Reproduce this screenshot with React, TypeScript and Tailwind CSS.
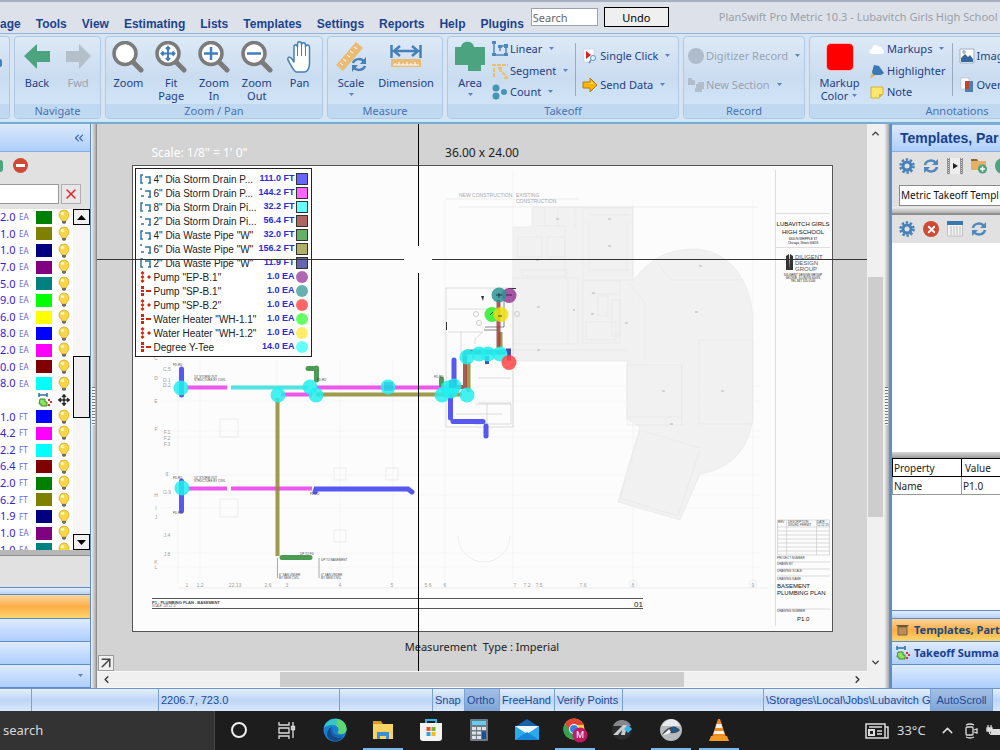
import React from 'react';
import { ChevronDown, ChevronLeft, ChevronRight, ChevronUp, ChevronsLeft, ArrowUpRight, Move, X } from 'lucide-react';

interface TakeoffRow {
    value: string;
    unit: string;
    color: string;
}

interface LegendItem {
    name: string;
    value: string;
    color: string;
    kind: 'line' | 'count';
}

const menuItems = ['age', 'Tools', 'View', 'Estimating', 'Lists', 'Templates', 'Settings', 'Reports', 'Help', 'Plugins'];

const countRows: TakeoffRow[] = [
    { value: '2.0', unit: 'EA', color: 'bg-[#008000]' },
    { value: '1.0', unit: 'EA', color: 'bg-[#808000]' },
    { value: '1.0', unit: 'EA', color: 'bg-[#000080]' },
    { value: '7.0', unit: 'EA', color: 'bg-[#800080]' },
    { value: '5.0', unit: 'EA', color: 'bg-[#008080]' },
    { value: '9.0', unit: 'EA', color: 'bg-[#00ff00]' },
    { value: '6.0', unit: 'EA', color: 'bg-[#ffff00]' },
    { value: '8.0', unit: 'EA', color: 'bg-[#0000ff]' },
    { value: '2.0', unit: 'EA', color: 'bg-[#ff00ff]' },
    { value: '0.0', unit: 'EA', color: 'bg-[#800000]' },
    { value: '8.0', unit: 'EA', color: 'bg-[#00ffff]' },
];

const pipeRows: TakeoffRow[] = [
    { value: '1.0', unit: 'FT', color: 'bg-[#0000ff]' },
    { value: '4.2', unit: 'FT', color: 'bg-[#ff00ff]' },
    { value: '2.2', unit: 'FT', color: 'bg-[#00ffff]' },
    { value: '6.4', unit: 'FT', color: 'bg-[#800000]' },
    { value: '2.0', unit: 'FT', color: 'bg-[#008000]' },
    { value: '6.2', unit: 'FT', color: 'bg-[#808000]' },
    { value: '1.9', unit: 'FT', color: 'bg-[#000080]' },
    { value: '1.0', unit: 'EA', color: 'bg-[#800080]' },
    { value: '1.0', unit: 'EA', color: 'bg-[#008080]' },
];

const legendItems: LegendItem[] = [
    { name: '4" Dia Storm Drain P...', value: '111.0 FT', color: 'bg-[#6666ff]', kind: 'line' },
    { name: '6" Dia Storm Drain P...', value: '144.2 FT', color: 'bg-[#ff66ff]', kind: 'line' },
    { name: '8" Dia Storm Drain Pi...', value: '32.2 FT', color: 'bg-[#66ffff]', kind: 'line' },
    { name: '2" Dia Storm Drain Pi...', value: '56.4 FT', color: 'bg-[#b06660]', kind: 'line' },
    { name: '4" Dia Waste Pipe "W"', value: '32.0 FT', color: 'bg-[#66b066]', kind: 'line' },
    { name: '6" Dia Waste Pipe "W"', value: '156.2 FT', color: 'bg-[#b0b066]', kind: 'line' },
    { name: '2" Dia Waste Pipe "W"', value: '11.9 FT', color: 'bg-[#6666b0]', kind: 'line' },
    { name: 'Pump "EP-B.1"', value: '1.0 EA', color: 'bg-[#b066b0]', kind: 'count' },
    { name: 'Pump "SP-B.1"', value: '1.0 EA', color: 'bg-[#66b0b0]', kind: 'count' },
    { name: 'Pump "SP-B.2"', value: '1.0 EA', color: 'bg-[#ff6666]', kind: 'count' },
    { name: 'Water Heater "WH-1.1"', value: '1.0 EA', color: 'bg-[#66ff66]', kind: 'count' },
    { name: 'Water Heater "WH-1.2"', value: '1.0 EA', color: 'bg-[#ffee66]', kind: 'count' },
    { name: 'Degree Y-Tee', value: '14.0 EA', color: 'bg-[#66ffff]', kind: 'count' },
];

/* ---------- icons ---------- */

function Caret({ className = '' }: { className?: string }) {
    return (
        <svg className={className} width="7" height="4" viewBox="0 0 7 4">
            <path d="M1 0h5L3.500 3z" fill="#5b83bd" />
        </svg>
    );
}

function Magnifier({ children }: { children?: React.ReactNode }) {
    return (
        <svg width="32" height="32" viewBox="0 0 32 32">
            <path d="M21 21l8 8" stroke="#7b7b7b" strokeWidth="5" strokeLinecap="round" />
            <circle cx="13" cy="12.500" r="11" fill="#fff" stroke="#7b7b7b" strokeWidth="3.500" />
            {children}
        </svg>
    );
}

function HandIcon() {
    return (
        <svg width="32" height="32" viewBox="0 0 32 32">
            <path
                d="M12 31c-3-2-5-7-8-12-1-3 2-4 4-1l2 3V6c0-3 3-3 3.500 0V3c0-3 4-3 4 0v1c0-3 4-3 4 0v2c0-3 4-2.500 4 .5V22c0 5-2 9-5 9z"
                fill="#fff"
                stroke="#4580b8"
                strokeWidth="1.500"
                strokeLinejoin="round"
            />
            <path d="M13.500 6v9M17.500 4v11M21.500 6v9" stroke="#4580b8" strokeWidth="1" />
        </svg>
    );
}

function BlockArrow({ flip = false, color }: { flip?: boolean; color: string }) {
    return (
        <svg width="32" height="32" viewBox="0 0 32 32">
            <path d={flip ? 'M29 15L17 3v7H4v11h13v7z' : 'M3 15L16 3v7h13v11H16v7z'} fill={color} />
        </svg>
    );
}

function ScaleIcon() {
    return (
        <svg width="32" height="32" viewBox="0 0 32 32">
            <path d="M1 24L21 1l7 6L8 30z" fill="#e9bb74" />
            <path d="M5 22l3 2M8 18l3 2M12 14l3 2M15 10l3 2M19 6l3 2" stroke="#fff" strokeWidth="1" />
            <g fill="none" stroke="#4580b8" strokeWidth="2.500">
                <path d="M18 22c2-5 9-5 11-1M30 25c-2 5-9 5-11 1" />
            </g>
            <path d="M31 16v7h-6zM17 31v-7h6z" fill="#4580b8" />
        </svg>
    );
}

function DimensionIcon() {
    return (
        <svg width="32" height="32" viewBox="0 0 32 32">
            <path d="M1.500 4v13M30.500 4v13M4 10h24M10 5l-6 5 6 5M22 5l6 5-6 5" fill="none" stroke="#4580b8" strokeWidth="2.500" />
            <path d="M1 18h30v8H1z" fill="#e9bb74" />
            <path d="M3 24h26M5 22v2M9 21v3M13 22v2M17 21v3M21 22v2M25 21v3" stroke="#fff" strokeWidth="1" />
        </svg>
    );
}

function AreaIcon() {
    return (
        <svg width="32" height="32" viewBox="0 0 32 32">
            <path d="M1 6h6c1-7 12-7 13 0h11v18h-4v6H14v-6H1z" fill="#4ba37f" />
        </svg>
    );
}

function LinearIcon() {
    return (
        <svg width="16" height="16" viewBox="0 0 16 16">
            <path d="M2 1v13h12V5H8v5" fill="none" stroke="#4d87bb" strokeWidth="1.500" />
            <path d="M0 0h4v3H0zM0 12h4v3H0zM12 12h4v3h-4zM12 3h4v4h-4zM6 4h4v3H6z" fill="#4d87bb" />
        </svg>
    );
}

function SegmentIcon() {
    return (
        <svg width="16" height="16" viewBox="0 0 16 16">
            <path d="M0 2h16M2 5v10M7 6l8 8" stroke="#e8c070" strokeWidth="2" strokeDasharray="4 1" />
            <path d="M6 5h4M12 15h4" stroke="#e8c070" strokeWidth="2" />
        </svg>
    );
}

function CountIcon() {
    return (
        <svg width="16" height="16" viewBox="0 0 16 16" fill="#4795b4">
            <circle cx="4" cy="4" r="3.500" />
            <circle cx="12" cy="8" r="3" />
            <circle cx="4" cy="12" r="3.500" />
        </svg>
    );
}

function SingleClickIcon() {
    return (
        <svg width="16" height="16" viewBox="0 0 16 16">
            <path d="M2 1h10v13H2z" fill="#fff" stroke="#b8c4d4" strokeWidth="0.500" />
            <path d="M4 3v8l5-4z" fill="#d22" />
            <circle cx="11" cy="10" r="2.500" fill="#dff" stroke="#5a90c4" />
            <path d="M9 12l-2 3" stroke="#5a90c4" strokeWidth="1.500" />
        </svg>
    );
}

function SendIcon() {
    return (
        <svg width="16" height="16" viewBox="0 0 16 16">
            <path d="M1 5h7V1l7 7-7 7v-4H1z" fill="#f7b500" stroke="#b87a10" />
            <path d="M2 6h7V4l3 3z" fill="#ffe27a" />
        </svg>
    );
}

function GearIcon() {
    return (
        <svg width="16" height="16" viewBox="0 0 16 16">
            <circle cx="8" cy="8" r="4" fill="none" stroke="#4580b8" strokeWidth="3" />
            <circle cx="8" cy="8" r="6.500" fill="none" stroke="#4580b8" strokeWidth="2.500" strokeDasharray="2.400 1.680" />
        </svg>
    );
}

function RefreshIcon() {
    return (
        <svg width="16" height="16" viewBox="0 0 16 16">
            <path d="M2 7c1-5 8-6 11-2M14 9c-1 5-8 6-11 2" fill="none" stroke="#5088bc" strokeWidth="2.500" />
            <path d="M15 1v6H9zM1 15V9h6z" fill="#5088bc" />
        </svg>
    );
}

function BulbIcon() {
    return (
        <svg width="12" height="16" viewBox="0 0 12 16" className="shrink-0">
            <path d="M6 1a5 5 0 0 0-3 9l1 2h4l1-2a5 5 0 0 0-3-9z" fill="#f8d648" stroke="#d7a82c" strokeWidth="0.800" />
            <circle cx="4.500" cy="4.500" r="1.800" fill="#fff6b8" />
            <path d="M4 12h4v2L6 15 4 14z" fill="#6f6f68" />
        </svg>
    );
}

function TakeoffIcon() {
    return (
        <svg width="14" height="14" viewBox="0 0 14 14" className="shrink-0">
            <path d="M1 2h8M1 0v4M9 0v4" stroke="#2b72a8" strokeWidth="1.500" />
            <path d="M2 6h5v3h2v4H3v-2H1z" fill="#8fe35c" stroke="#3a8a2a" />
            <path d="M10 6h2v2h-2zM12 8h2v2h-2zM10 11h2v2h-2z" fill="#d33" />
        </svg>
    );
}

function LegendGlyph({ kind, round }: { kind: 'line' | 'count'; round: boolean }) {
    if (kind === 'count') {
        return (
            <svg width="12" height="12" viewBox="0 0 12 12" fill="#cc2a10">
                {round ? (
                    <path d="M2.500 0l2 2-2 2-2-2zM2.500 4l2 2-2 2-2-2zM2.500 8l2 2-2 2-2-2zM9 4l2 2-2 2-2-2z" />
                ) : (
                    <path d="M1 1h3v3H1zM1 5h3v2H1zM1 8h3v3H1zM6 5h5v2H6z" />
                )}
            </svg>
        );
    }
    return (
        <svg width="12" height="12" viewBox="0 0 12 12">
            <path d={round ? 'M3 2H1v8h2M5 4h5v6M8 10h3' : 'M1 1v2M1 9h3M5 4h5v6M8 10h3'} fill="none" stroke="#2f74a5" strokeWidth="1.500" />
        </svg>
    );
}

/* ---------- ribbon ---------- */

function RibbonGroup({ title, className, children }: { title: string; className: string; children?: React.ReactNode }) {
    return (
        <section className={`flex shrink-0 flex-col overflow-hidden rounded-sm border border-[#afc9e4] bg-gradient-to-b from-[#dde9f6] via-[#cadcf0] to-[#d5e7f9] ${className}`}>
            <div className="flex flex-1 pt-1">{children}</div>
            <div className="h-[14px] bg-[#c1d8f1] text-center text-[11px] leading-[14px] text-[#4572b2]">{title}</div>
        </section>
    );
}

function BigButton({ icon, label, caret = false, inlineCaret = false, disabled = false, className = '' }: {
    icon: React.ReactNode;
    label: string[];
    caret?: boolean;
    inlineCaret?: boolean;
    disabled?: boolean;
    className?: string;
}) {
    return (
        <button disabled={disabled} className={`flex flex-col items-center text-[11px] leading-[13px] ${disabled ? 'text-[#9aa3b0]' : 'text-[#1d4088]'} ${className}`}>
            <span className="mb-[3px] flex h-8 items-center">{icon}</span>
            {label.map((line, i) => (
                <span key={line} className="flex items-center gap-[3px]">
                    {line}
                    {inlineCaret && i === label.length - 1 && <Caret />}
                </span>
            ))}
            {caret && <Caret className="mt-1" />}
        </button>
    );
}

function SmallButton({ icon, label, caret = false, disabled = false }: {
    icon: React.ReactNode;
    label: string;
    caret?: boolean;
    disabled?: boolean;
}) {
    return (
        <button disabled={disabled} className={`flex items-center gap-[2px] whitespace-nowrap text-[11px] leading-4 ${disabled ? 'text-[#9aa3b0]' : 'text-[#1d4088]'}`}>
            {icon}
            {label}
            {caret && <Caret className="ml-1" />}
        </button>
    );
}

function Ribbon() {
    return (
        <div className="flex h-[87px] shrink-0 gap-1 overflow-hidden bg-[#d6e4f3] pt-[2px] pb-[2px]">
            <section className="flex w-[10px] shrink-0 flex-col justify-between overflow-hidden rounded-r-sm border border-l-0 border-[#afc9e4] bg-gradient-to-b from-[#dde9f6] via-[#cadcf0] to-[#d5e7f9]">
                <span className="mt-[22px] h-2 w-[2px] rounded-r-full bg-[#4580b8]" />
                <div className="h-[14px] bg-[#c1d8f1]" />
            </section>
            <RibbonGroup title="Navigate" className="w-[87px]">
                <BigButton icon={<BlockArrow color="#4ba37f" />} label={['Back']} className="w-[44px]" />
                <BigButton icon={<BlockArrow flip color="#b4bfcb" />} label={['Fwd']} disabled className="w-[38px]" />
            </RibbonGroup>
            <RibbonGroup title="Zoom / Pan" className="w-[218px]">
                <div className="grid flex-1 grid-cols-5 px-[1px]">
                    <BigButton icon={<Magnifier />} label={['Zoom']} />
                    <BigButton
                        icon={
                            <Magnifier>
                                <path d="M13 6v13M6.500 12.500h13M11 8l2-2 2 2M11 17l2 2 2-2M8.500 10.500l-2 2 2 2M17.500 10.500l2 2-2 2" fill="none" stroke="#3f7fbe" strokeWidth="2" />
                            </Magnifier>
                        }
                        label={['Fit', 'Page']}
                    />
                    <BigButton icon={<Magnifier><path d="M13 6v13M6 12.500h14" stroke="#3f7fbe" strokeWidth="2.500" /></Magnifier>} label={['Zoom', 'In']} />
                    <BigButton icon={<Magnifier><path d="M6 12.500h14" stroke="#3f7fbe" strokeWidth="2.500" /></Magnifier>} label={['Zoom', 'Out']} />
                    <BigButton icon={<HandIcon />} label={['Pan']} />
                </div>
            </RibbonGroup>
            <RibbonGroup title="Measure" className="w-[116px]">
                <BigButton icon={<ScaleIcon />} label={['Scale']} caret className="w-[46px]" />
                <BigButton icon={<DimensionIcon />} label={['Dimension']} className="w-[64px]" />
            </RibbonGroup>
            <RibbonGroup title="Takeoff" className="w-[232px]">
                <BigButton icon={<AreaIcon />} label={['Area']} caret className="w-[44px]" />
                <div className="mb-1 flex flex-col justify-between">
                    <SmallButton icon={<LinearIcon />} label="Linear" caret />
                    <SmallButton icon={<SegmentIcon />} label="Segment" caret />
                    <SmallButton icon={<CountIcon />} label="Count" caret />
                </div>
                <div className="mx-[6px] mt-[2px] mb-2 w-px bg-[#9aa9bd]" />
                <div className="mb-1 flex flex-col justify-center gap-[13px]">
                    <SmallButton icon={<SingleClickIcon />} label="Single Click" caret />
                    <SmallButton icon={<SendIcon />} label="Send Data" caret />
                </div>
            </RibbonGroup>
            <RibbonGroup title="Record" className="w-[122px]">
                <div className="mb-1 ml-1 flex flex-col justify-center gap-[13px]">
                    <SmallButton icon={<span className="size-4 rounded-full bg-[#aebccb]" />} label="Digitizer Record" caret disabled />
                    <SmallButton
                        icon={
                            <svg width="16" height="16" viewBox="0 0 16 16" fill="#b1bdcb">
                                <path d="M0 1h4v2h3v5H0zM8 7h2V5h6v7h-2v3H7v-4h1z" />
                            </svg>
                        }
                        label="New Section"
                        caret
                        disabled
                    />
                </div>
            </RibbonGroup>
            <RibbonGroup title="Annotations" className="w-[296px]">
                <BigButton icon={<span className="size-[26px] rounded-sm bg-[#ff0000] ring-1 ring-[#f5b5b5]" />} label={['Markup', 'Color']} inlineCaret className="w-[59px]" />
                <div className="mb-1 flex flex-col justify-between">
                    <SmallButton
                        icon={
                            <svg width="16" height="16" viewBox="0 0 16 16">
                                <path d="M3 13c-4 0-3-5 0-5 0-5 6-5 7-2 3-1 3 2 3 2 3 1 2 5 0 5z" fill="#fff" />
                            </svg>
                        }
                        label="Markups"
                        caret
                    />
                    <SmallButton
                        icon={
                            <svg width="16" height="16" viewBox="0 0 16 16">
                                <path d="M5 2l5 1 5 7-3 2H4L3 9z" fill="#3c78b4" />
                                <path d="M3 10l3 3-5 2z" fill="#e2b266" />
                            </svg>
                        }
                        label="Highlighter"
                    />
                    <SmallButton
                        icon={
                            <svg width="16" height="16" viewBox="0 0 16 16">
                                <path d="M2 3h12v7l-4 4H2z" fill="#fbe76d" stroke="#d4b13c" />
                                <path d="M14 10h-4v4z" fill="#d9b544" />
                            </svg>
                        }
                        label="Note"
                    />
                </div>
                <div className="mx-[6px] mt-[2px] mb-2 w-px bg-[#9aa9bd]" />
                <div className="mb-1 flex flex-col justify-center gap-[13px]">
                    <SmallButton
                        icon={
                            <svg width="16" height="16" viewBox="0 0 16 16">
                                <path d="M1 1h14v14H1z" fill="#fff" stroke="#9fb0c4" />
                                <path d="M2 14V10l4-4 3 3 2-2 3 4v3z" fill="#35699e" />
                                <circle cx="5" cy="4" r="2" fill="#b8b8b8" />
                            </svg>
                        }
                        label="Imag"
                    />
                    <SmallButton
                        icon={
                            <svg width="16" height="16" viewBox="0 0 16 16">
                                <path d="M2 1h8v11H2z" fill="#fff" stroke="#aaa" strokeWidth="0.500" />
                                <path d="M6 4h8v11H6z" fill="#4a7fb2" />
                                <path d="M6 4h4v8H6z" fill="#c9432c" />
                            </svg>
                        }
                        label="Over"
                    />
                </div>
            </RibbonGroup>
        </div>
    );
}

/* ---------- left panel ---------- */

function TakeoffRowView({ row }: { row: TakeoffRow }) {
    return (
        <div className="flex min-h-0 flex-1 items-center overflow-hidden text-[11px] text-[#3a22d0]">
            <span className="w-4 flex-none">{row.value}</span>
            <span className="ml-[3px] w-[17px] text-[8px] text-[#6a66e8]">{row.unit}</span>
            <span className={`h-[13px] w-4 ${row.color}`} />
            <span className="ml-[6px]"><BulbIcon /></span>
        </div>
    );
}

function LeftPanel() {
    return (
        <aside className="flex w-[91px] shrink-0 flex-col border-r border-[#5d8cc9] bg-[#e1e1e1]">
            <div className="flex h-[28px] items-center justify-end border-b border-[#86aede] bg-gradient-to-b from-[#dbe8fb] to-[#aecffa] pr-1">
                <button aria-label="Collapse panel"><ChevronsLeft size={14} color="#3c68a8" /></button>
            </div>
            <div className="flex h-[27px] items-center">
                <span className="h-3 w-[3px] rounded-r-full bg-[#4ba37f]" />
                <button aria-label="Remove" className="ml-[10px] flex size-[15px] items-center justify-center rounded-full bg-[#cf4a35]">
                    <span className="h-[3px] w-[9px] bg-white" />
                </button>
            </div>
            <div className="flex h-[30px] items-center gap-[2px]">
                <input aria-label="Filter" className="h-5 w-[59px] border border-l-0 border-[#9a9a9a] bg-white" />
                <button aria-label="Clear filter" className="flex h-5 w-5 items-center justify-center border border-[#b0b0b0] bg-[#e8e8e8]">
                    <X size={16} color="#e02020" />
                </button>
            </div>
            <div className="flex min-h-0 flex-1 overflow-hidden bg-white">
                <div className="flex h-[349px] w-[73px] shrink-0 flex-col">
                    {countRows.map((row, i) => <TakeoffRowView key={i} row={row} />)}
                    <div className="flex min-h-0 flex-1 items-center gap-[6px] pl-[38px]">
                        <TakeoffIcon />
                        <Move size={12} color="#222" strokeWidth={3} />
                    </div>
                    {pipeRows.map((row, i) => <TakeoffRowView key={i} row={row} />)}
                </div>
                <div className="flex w-[17px] flex-col justify-between bg-[#f6f6f6]">
                    <button aria-label="Scroll up" className="flex h-4 items-center justify-center border border-black bg-[#f0f0f0]">
                        <svg width="9" height="5" viewBox="0 0 9 5"><path d="M0 5h9L4.500 0z" /></svg>
                    </button>
                    <div className="mt-[14px] h-[62px] border border-black bg-[#ededed]" />
                    <button aria-label="Scroll down" className="flex h-4 items-center justify-center border border-black bg-[#f0f0f0]">
                        <svg width="9" height="5" viewBox="0 0 9 5"><path d="M0 0h9L4.500 5z" /></svg>
                    </button>
                </div>
            </div>
            <div className="h-[6px] border-b border-[#8f8f8f] bg-[#b8b8b8]" />
            <div className="h-[31px]" />
            <div className="h-[7px] border-t border-[#5d8cc9] bg-gradient-to-b from-[#e3edfc] to-[#b7d2f7]" />
            <div className="h-6 border-t border-[#5d8cc9] bg-gradient-to-b from-[#fbd49b] via-[#fdae45] to-[#fbd56e]" />
            <div className="h-[23px] border-t border-[#5d8cc9] bg-gradient-to-b from-[#dfebfe] to-[#adcefc]" />
            <div className="h-[23px] border-t border-[#5d8cc9] bg-gradient-to-b from-[#dfebfe] to-[#adcefc]" />
            <div className="flex h-6 items-center justify-end border-t border-b border-[#5d8cc9] bg-gradient-to-b from-[#dfebfe] to-[#adcefc] pr-[6px]">
                <Caret />
            </div>
        </aside>
    );
}

function Splitter() {
    return (
        <div className="flex w-[6px] shrink-0 flex-col justify-center border-r border-[#8d8d8d] bg-gradient-to-r from-[#f4f4f4] to-[#a9a9a9]">
            <div className="ml-[1px] h-[38px] w-[3px] bg-[repeating-linear-gradient(to_bottom,#777_0_1px,#f4f4f4_1px_3px)]" />
        </div>
    );
}

/* ---------- drawing canvas ---------- */

const gridColumns: [string, number][] = [
    ['1', 187], ['1.2', 200], ['22.13', 235], ['2.6', 268], ['3', 287], ['4', 340], ['5', 392], ['5.6', 428],
    ['6', 445], ['7', 515], ['7.2', 527], ['7.5', 539], ['7.6', 583], ['8', 633], ['9', 753],
];

const gridRows: [string, number, number][] = [
    ['C', 156, 360], ['C.5', 167, 371], ['D', 156, 380], ['D.1', 167, 382], ['D.2', 167, 387], ['E', 156, 403], ['F', 156, 431],
    ['F.1', 167, 434], ['F.2', 167, 440], ['F.3', 167, 446], ['g', 167, 475], ['G.9', 167, 494], ['H', 156, 497],
    ['I', 156, 510], ['J', 156, 519], ['J.4', 167, 537], ['J.8', 167, 556], ['K', 156, 564], ['L', 156, 569],
];

const cyanMarkers = [
    [181, 388], [310, 387], [316, 395], [278, 395], [388, 387], [442, 395], [448, 388], [454, 386], [451, 391],
    [467, 395], [467, 357], [479, 354], [488, 354], [500, 354], [182, 488],
];

function PlanDrawing() {
    return (
        <svg className="block" width="701" height="468" viewBox="132 165 701 468" fontFamily="Liberation Sans, Arial, sans-serif">
            <rect x="132.500" y="165.500" width="700" height="466" fill="#fcfcfc" stroke="#555" />

            {/* existing building */}
            <g fill="#f1f1f1" stroke="#e6e6e6" strokeWidth="0.600">
                <path d="M513 227h19v-20h101v74c17-23 37-32 60-32 36 0 60 32 60 75v85c0 36-20 60-53 65l-20 46-62-18 22-75-13-8v-58H513z" />
                <path d="M513 278h65v66h-65zM583 208h50v72h-50zM583 281h37v62h-37zM627 365h55v60h-55zM699 340h54v84h-54zM627 417h55M536 226h29M545 208v18M590 215h40M590 270h40M657 262l14 18h72M629 283l16 20v58" fill="none" />
                <path d="M598 296h10v20h-10zM612 300h8v36h-8zM518 237h24v20h-24zM547 237h18v20h-18zM640 430l-20 68 58 18 22-66" fill="none" />
                <path d="M568 278v66M565 227v51M589 222v50M627 222v50M522 270h45v6h-45zM586 322h30v18h-30zM590 294h28M558 209v18M575 209v18M513 350h70M583 350h44M682 365v60M640 430l60 18" fill="none" />
            </g>
            <path d="M536 260h3M556 219h3M608 219h3M608 246h3M537 307h3M537 350h3M592 293h3M591 314h3M695 312h3M699 266h3M662 391h3M721 391h3M670 424h3M573 310h2M625 323h3" stroke="#b5b5b5" strokeWidth="1" />
            <g fill="none" stroke="#e2e2e2" strokeWidth="0.600">
                <path d="M178 170v414M200 360v224M277 360v224M340 360v224M393 360v224M445 200v384M513 170v414M633 200v384M753 200v384" stroke="#f0f0f0" />
                <path d="M160 386h600M160 401h600M160 431h600M160 437h600M160 475h600M160 495h600M160 508h600M160 553h600M160 567h600" stroke="#f1f1f1" />
                <path d="M446 199h133M458 207h300M178 588h590M220 419h18v18h-18zM220 499h18v18h-18zM334 468h12v12h-12zM386 468h12v12h-12zM334 530h12v12h-12z" />
                <path d="M458 536a26 26 0 0 0 52 0" />
                <circle cx="633" cy="584" r="4" />
                <circle cx="753" cy="584" r="4" />
            </g>

            {/* new construction room walls */}
            <g fill="none" stroke="#bcbcbc" strokeWidth="0.700">
                <path d="M446 288h67v139h-67zM448 309h50M448 332h35l-8 7v5M461 332v22M475 404h36v20h-36M478 378h33M478 403h33M456 414h46M487 404v20" stroke="#cfcfcf" />
                <path d="M504 300v27h-19M484 330h14" stroke="#555" />
                <circle cx="476" cy="314" r="2.500" />
                <circle cx="517" cy="314" r="2.500" />
                <circle cx="479" cy="323" r="2.500" />
            </g>
            <g fill="#333">
                <path d="M481 296h3l-1 5zM446 322h1v8h-1zM508 288h8v1h-8z" />
            </g>

            {/* pipe runs */}
            <g fill="none" strokeWidth="5" strokeOpacity="0.850">
                <g stroke="#3a3aee" strokeLinecap="round">
                    <path d="M181.500 369v26M181.500 481v30M454 360v24M450.500 396v22M453 421.500h30M486 426v10" />
                    <path d="M315 492l1-3h92l4 3" />
                </g>
                <g stroke="#ea3aea" strokeWidth="4">
                    <path d="M187 387.500h40M316 387.500h129M281 394.500h31M188 488.500h39M231 488.500h81" />
                </g>
                <path d="M231 387.500h77" stroke="#30dede" strokeWidth="4" />
                <path d="M277.500 398v158M316 394.500h146M468.500 362v30M500.500 332v15" stroke="#8d8a2e" strokeWidth="4" />
                <path d="M498.500 300v48M465 356v31h-15" stroke="#9a4038" strokeWidth="4" />
                <path d="M465 360v-5c0-2 1-3 3-3h38" stroke="#2c8a90" strokeWidth="5" />
                <path d="M282 557.500h28M308 368.500h7M316.500 368v12M441.500 379v6" stroke="#2b8a35" strokeLinecap="round" />
                <path d="M506 350.500h3v10M487 356v8" stroke="#2a2aa8" strokeWidth="4" />
            </g>
            <g fill="#22eeee" fillOpacity="0.850">
                {cyanMarkers.map(([cx, cy]) => <circle key={`${cx}-${cy}`} cx={cx} cy={cy} r="7.500" />)}
            </g>
            <path d="M384 382h9v9h-9zM449 380h8v8h-8z" fill="#20b8e0" fillOpacity="0.500" />
            <g fillOpacity="0.850">
                <circle cx="509" cy="295.500" r="7.500" fill="#983a98" />
                <circle cx="499" cy="295" r="7.500" fill="#2b9494" />
                <circle cx="492" cy="314.500" r="7.500" fill="#28ee28" />
                <circle cx="501" cy="314.500" r="7.500" fill="#eedd10" />
                <circle cx="509" cy="362.500" r="7.500" fill="#ff4444" />
            </g>
            <path d="M496 295h6M506 295h6M490 315l3-3M498 316h4M499 293v5" stroke="#222" strokeWidth="0.800" />
            <path d="M277.500 558v20M319 558v20" stroke="#888" strokeWidth="0.700" />

            {/* grid bubbles */}
            <g fontSize="5" fill="#9c9c9c" textAnchor="middle">
                {gridColumns.map(([label, x]) => <text key={label} x={x} y="587">{label}</text>)}
                {gridRows.map(([label, x, y]) => <text key={label} x={x} y={y}>{label}</text>)}
            </g>

            {/* callouts */}
            <g fontSize="3" fill="#444">
                <text x="194" y="378">10" STORM OUT</text>
                <text x="194" y="381">STRUCTURE BY CIVIL</text>
                <text x="194" y="479">10" STORM OUT</text>
                <text x="194" y="482">STRUCTURE BY CIVIL</text>
                <text x="279" y="576">6" SAN UNDER</text>
                <text x="279" y="579">BY NEW CIVIL</text>
                <text x="321" y="576">6" SAN UNDER</text>
                <text x="321" y="579">BY NEW CIVIL</text>
                <text x="321" y="561">UP TO BASEMENT</text>
                <text x="300" y="555">UP TO FD</text>
                <text x="173" y="366">FD-RD</text>
                <text x="173" y="479">FD-RD</text>
                <text x="173" y="514">FD-RD</text>
                <text x="434" y="378">FD-RD</text>
                <text x="310" y="495">FD-RD</text>
                <text x="317" y="381">FD-RD</text>
            </g>
            <g fontSize="5" fill="#a8a8a8">
                <text x="459" y="197">NEW CONSTRUCTION</text>
                <text x="516" y="197">EXISTING</text>
                <text x="516" y="203">CONSTRUCTION</text>
            </g>

            {/* view title */}
            <path d="M152 598.500h491M152 608.500h491" stroke="#555" />
            <text x="152" y="604" fontSize="4" fontWeight="bold" fill="#444">P1 - PLUMBING PLAN - BASEMENT</text>
            <text x="152" y="607" fontSize="3" fill="#555">SCALE: 1/8"=1'-0"</text>
            <text x="634" y="607" fontSize="8" fill="#222">01</text>

            {/* title block */}
            <path d="M775.500 170v456M776 213.500h54M776 247.500h54" stroke="#dedede" />
            <g textAnchor="middle" fill="#111">
                <text x="803" y="226" fontSize="6">LUBAVITCH GIRLS</text>
                <text x="803" y="234" fontSize="6">HIGH SCHOOL</text>
                <text x="803" y="240" fontSize="3">6300 N WHIPPLE ST</text>
                <text x="803" y="244" fontSize="3">Chicago, Illinois 60659</text>
                <text x="803" y="276" fontSize="3">DILIGENT DESIGN GROUP</text>
                <text x="803" y="279" fontSize="3">SKOKIE, ILLINOIS 60076</text>
                <text x="803" y="282" fontSize="3">TEL 847 555 0100</text>
            </g>
            <path d="M786 270v-14l3-2 1 16zM790 270v-16l3 2v14z" fill="#333" />
            <g fontSize="6" fill="#555">
                <text x="795" y="259">DILIGENT</text>
                <text x="795" y="265">DESIGN</text>
                <text x="795" y="271">GROUP</text>
            </g>
            <path
                d="M777.500 520h52v35h-52zM777 527h53M777 531h53M777 535h53M777 539h53M777 543h53M777 547h53M777 551h53M786.500 520v35M816.500 520v35M777 562h53M777 569h53M777 576h53M777 609h53"
                fill="none"
                stroke="#c4c4c4"
                strokeWidth="0.600"
            />
            <g fontSize="3" fill="#444">
                <text x="778" y="523">REV</text>
                <text x="788" y="523">DESCRIPTION</text>
                <text x="788" y="526">ISSUED PERMIT</text>
                <text x="817" y="523">DATE</text>
                <text x="817" y="526">12.12.19</text>
                <text x="777" y="559">PROJECT NUMBER</text>
                <text x="777" y="565">DRAWN BY</text>
                <text x="777" y="572">DRAWING SCALE</text>
                <text x="777" y="580">DRAWING NAME</text>
                <text x="777" y="612">DRAWING NUMBER</text>
            </g>
            <g fontSize="6" fill="#111">
                <text x="777" y="588">BASEMENT</text>
                <text x="777" y="595">PLUMBING PLAN</text>
                <text x="797" y="621">P1.0</text>
            </g>
        </svg>
    );
}

function Legend() {
    return (
        <ul className="absolute top-[3px] left-[3px] w-[177px] border border-[#222] bg-white pt-[3px] pb-[2px] pl-1 font-['Liberation_Sans',Arial,sans-serif]">
            {legendItems.map((item, i) => (
                <li key={item.name} className="flex h-[14px] items-center text-[10px] text-[#222]">
                    <LegendGlyph kind={item.kind} round={i % 2 === (item.kind === 'line' ? 0 : 1)} />
                    <span className="ml-[2px] flex-1 whitespace-nowrap">{item.name}</span>
                    <span className="whitespace-nowrap text-[9px] font-bold text-[#2a2ad8]">{item.value}</span>
                    <span className={`mr-[3px] ml-[1px] size-3 ${item.kind === 'line' ? 'border border-[#333]' : 'rounded-full'} ${item.color}`} />
                </li>
            ))}
        </ul>
    );
}

function Canvas() {
    return (
        <main className="flex min-w-0 flex-1 flex-col bg-[#f0f0f0]">
            <div className="flex min-h-0 flex-1">
                <div className="relative min-w-0 flex-1 overflow-hidden bg-[#d3d3d3]">
                    <div className="mx-auto w-[701px]">
                        <div className="grid h-[41px] grid-cols-3 items-center pt-4 text-[12px]">
                            <span className="pl-5 text-white">Scale: 1/8" = 1' 0"</span>
                            <span className="text-center text-[#222]">36.00 x 24.00</span>
                        </div>
                        <div className="relative">
                            <PlanDrawing />
                            <Legend />
                        </div>
                        <p className="pt-[6px] text-center text-[11px] text-[#222]">Measurement&nbsp; Type : Imperial</p>
                    </div>
                    <div className="absolute top-[135px] left-0 h-px w-[307px] bg-[#333]" />
                    <div className="absolute top-[135px] right-0 left-[335px] h-px bg-[#333]" />
                    <div className="absolute top-0 left-[321px] h-[122px] w-px bg-black" />
                    <div className="absolute top-[149px] bottom-0 left-[321px] w-px bg-black" />
                    <button aria-label="Expand view" className="absolute bottom-0 left-[1px] flex size-4 items-center justify-center border border-[#999] bg-[#f0f0f0]">
                        <ArrowUpRight size={18} color="#444" className="shrink-0" />
                    </button>
                </div>
                <div className="flex w-[17px] shrink-0 flex-col items-center bg-[#f0f0f0] px-[1px]">
                    <button aria-label="Scroll up" className="flex h-[18px] items-center"><ChevronUp size={11} color="#333" strokeWidth={3} /></button>
                    <div className="flex-[135]" />
                    <div className="w-full flex-[241] bg-[#cdcdcd]" />
                    <div className="flex-[136]" />
                    <button aria-label="Scroll down" className="flex h-[18px] items-center"><ChevronDown size={11} color="#333" strokeWidth={3} /></button>
                </div>
            </div>
            <div className="mr-[17px] flex h-[17px] shrink-0 items-center border-y border-[#fafafa]">
                <button aria-label="Scroll left" className="flex w-[18px] justify-center"><ChevronLeft size={11} color="#333" strokeWidth={3} /></button>
                <div className="flex-[165]" />
                <div className="h-full flex-[403] bg-[#cdcdcd]" />
                <div className="flex-[165]" />
                <button aria-label="Scroll right" className="flex w-[18px] justify-center"><ChevronRight size={11} color="#333" strokeWidth={3} /></button>
            </div>
        </main>
    );
}

/* ---------- right panel ---------- */

function RightPanel() {
    return (
        <aside className="flex w-[110px] shrink-0 flex-col overflow-hidden border-l-2 border-[#5d8cc9] bg-white whitespace-nowrap">
            <h2 className="h-[28px] shrink-0 border-y border-[#86aede] bg-gradient-to-b from-[#dbe8fb] to-[#aecffa] pl-2 font-['Liberation_Sans',Arial,sans-serif] text-[14px] leading-[26px] font-bold text-[#17408f]">Templates, Par</h2>
            <div className="flex h-[27px] shrink-0 items-center gap-2 bg-[#e1e1e1] pl-[7px]">
                <button aria-label="Settings"><GearIcon /></button>
                <button aria-label="Refresh"><RefreshIcon /></button>
                <button aria-label="Preview">
                    <svg width="16" height="16" viewBox="0 0 16 16">
                        <path d="M0 0h16v16H0z" fill="#eee" />
                        <path d="M1.500 0v16M14.500 0v16" stroke="#777" strokeWidth="2.500" />
                        <path d="M1.500 0v16M14.500 0v16" stroke="#ddd" strokeWidth="1" strokeDasharray="1 1" />
                        <path d="M6 5v6l5-3z" fill="#222" />
                    </svg>
                </button>
                <button aria-label="New folder">
                    <svg width="16" height="16" viewBox="0 0 16 16">
                        <path d="M0 1h6l1 2h8v9H0z" fill="#e3b066" />
                        <path d="M0 1h6l1 2H0z" fill="#8c6a35" />
                        <circle cx="11.500" cy="11" r="4.500" fill="#4ba37f" />
                        <path d="M11.500 8.500v5M9 11h5" stroke="#fff" strokeWidth="1.500" />
                    </svg>
                </button>
                <span className="size-4 shrink-0 rounded-full bg-[#4ba37f]" />
            </div>
            <div className="h-[28px] shrink-0 bg-[#e1e1e1] pt-[6px] pl-[7px]">
                <select aria-label="Template set" className="block h-[21px] w-full appearance-none border border-r-0 border-[#8a8a8a] bg-white pl-[1px] text-[10px] text-[#111]">
                    <option>Metric Takeoff Templ</option>
                </select>
            </div>
            <div className="h-2 shrink-0 border-b-2 border-[#8f8f8f] bg-gradient-to-b from-[#f0f0f0] to-[#b0b0b0]" />
            <div className="flex h-[28px] shrink-0 items-center gap-2 bg-[#e1e1e1] pl-[7px]">
                <button aria-label="Item settings"><GearIcon /></button>
                <button aria-label="Delete item" className="flex size-4 items-center justify-center rounded-full bg-[#cf4a35]"><X size={11} color="#fff" strokeWidth={4} /></button>
                <button aria-label="Columns">
                    <svg width="16" height="16" viewBox="0 0 16 16">
                        <path d="M0.500 1h15v14h-15z" fill="#f4f4f4" stroke="#c0c0c0" />
                        <path d="M0 0h16v4H0z" fill="#3c76b0" />
                        <path d="M4 5v9M7 5v9M10 5v9M13 5v9" stroke="#bbb" />
                    </svg>
                </button>
                <button aria-label="Reload items"><RefreshIcon /></button>
            </div>
            <div className="flex-1" />
            <div className="h-[6px] shrink-0 bg-gradient-to-b from-[#d8d8d8] to-[#9a9a9a]" />
            <table className="w-full table-fixed border-collapse text-[10px] leading-4 text-[#222]">
                <thead>
                    <tr className="h-[18px]">
                        <th className="w-[69px] border border-black pl-[1px] text-left font-normal">Property</th>
                        <th className="border border-r-0 border-black pl-[3px] text-left font-normal">Value</th>
                    </tr>
                </thead>
                <tbody>
                    <tr className="h-[18px]">
                        <td className="border border-[#999] pl-[1px]">Name</td>
                        <td className="border border-r-0 border-[#999] pl-[1px]">P1.0</td>
                    </tr>
                </tbody>
            </table>
            <div className="h-[115px] shrink-0" />
            <div className="h-2 shrink-0 border-t border-[#5d8cc9] bg-gradient-to-b from-[#e3edfc] to-[#b7d2f7]" />
            <button className="flex h-[23px] shrink-0 items-center gap-[5px] border-t border-[#5d8cc9] bg-gradient-to-b from-[#fbd49b] via-[#fdae45] to-[#fbd56e] pl-1 text-[11px] font-bold text-[#1c4a80]">
                <svg width="13" height="12" viewBox="0 0 13 12" className="shrink-0">
                    <path d="M0 1h13l-2 2H2z" fill="#6c5535" />
                    <path d="M2 3h9v8H2z" fill="#b98f58" stroke="#7d6140" />
                </svg>
                Templates, Part
            </button>
            <button className="flex h-[23px] shrink-0 items-center gap-1 border-t border-[#5d8cc9] bg-gradient-to-b from-[#dfebfe] to-[#adcefc] pl-1 text-[11px] font-bold text-[#17408f]">
                <TakeoffIcon />
                Takeoff Summa
            </button>
            <div className="h-6 shrink-0 border-t border-[#5d8cc9] bg-gradient-to-b from-[#dfebfe] to-[#adcefc]" />
        </aside>
    );
}

/* ---------- status bar and taskbar ---------- */

function StatusBar() {
    const cell = 'flex shrink-0 items-center border-r border-[#7ba0d6] pl-[2px]';
    return (
        <footer className="flex h-[23px] shrink-0 overflow-hidden border-t border-[#6d93cb] bg-gradient-to-b from-[#e4effd] via-[#bdd5f5] to-[#d8e8fc] font-['Liberation_Sans',Arial,sans-serif] text-[11px] whitespace-nowrap text-[#1d4a97]">
            <div className={`${cell} w-8`} />
            <div className={`${cell} w-[127px]`} />
            <div className={`${cell} w-[181px]`}>2206.7, 723.0</div>
            <div className={`${cell} w-[93px]`} />
            <button className={`${cell} w-8`}>Snap</button>
            <button className={`${cell} w-[35px] bg-gradient-to-b from-[#a3c0e6] to-[#7ea4d6]`}>Ortho</button>
            <button className={`${cell} w-[55px]`}>FreeHand</button>
            <button className={`${cell} w-[68px]`}>Verify Points</button>
            <div className="flex-1 border-r border-[#7ba0d6]" />
            <div className={`${cell} w-[167px]`}>\Storages\Local\Jobs\Lubavitch G</div>
            <button className="flex w-[62px] shrink-0 items-center justify-center border-r border-[#7ba0d6] bg-gradient-to-b from-[#a3c0e6] to-[#7ea4d6]">AutoScroll</button>
            <div className="w-[7px] shrink-0" />
        </footer>
    );
}

function TaskIcon({ label, active = false, children }: { label: string; active?: boolean; children: React.ReactNode }) {
    return (
        <button aria-label={label} className="flex h-full w-12 shrink-0 flex-col items-center">
            <span className="flex flex-1 items-center">{children}</span>
            <span className={`h-[2px] w-10 ${active ? 'bg-[#76b9ed]' : ''}`} />
        </button>
    );
}

function Taskbar() {
    return (
        <nav className="flex h-[39px] shrink-0 items-center overflow-hidden bg-[#1d1d1d] text-[#d8d8d8]">
            <div className="flex h-full w-[215px] shrink-0 items-center border-r border-[#4a4a4a] bg-[#333] pl-[3px] text-[13px]">search</div>
            <TaskIcon label="Cortana">
                <svg width="18" height="18" viewBox="0 0 18 18"><circle cx="9" cy="9" r="7" fill="none" stroke="#eee" strokeWidth="2" /></svg>
            </TaskIcon>
            <TaskIcon label="Task view">
                <svg width="18" height="18" viewBox="0 0 18 18" fill="none" stroke="#ddd" strokeWidth="1.300">
                    <path d="M1 1v3h10V1M1 7h10v5H1zM1 18v-3h10v3M15 1v16M13.500 5.500h3v3h-3z" />
                </svg>
            </TaskIcon>
            <TaskIcon label="Edge">
                <svg width="24" height="24" viewBox="0 0 24 24">
                    <circle cx="12" cy="12" r="11.500" fill="#1b7fd0" />
                    <path d="M1 10C3-2 23-3 23.500 11c0 5-6 6-9 4 3-5-1-8-5-8-4 0-7 1-8.500 3z" fill="#36c5c4" />
                    <path d="M14 1c6 1 9.500 5 9.500 10 0 5-6 6-9 4 3-3 1-6-1-7z" fill="#5fd672" />
                    <path d="M9 9c-4 5 1 13 11 10-4 6-15 5-16-2 0-4 2-7 5-8z" fill="#114a8b" />
                    <path d="M10 10c-2 5 3 9 11 7-1 2-12 4-13-2 0-2 0-4 2-5z" fill="#1a5fa8" />
                </svg>
            </TaskIcon>
            <TaskIcon label="File Explorer" active>
                <svg width="22" height="20" viewBox="0 0 22 20">
                    <path d="M1 1h8l2 3H1z" fill="#d89a25" />
                    <path d="M1 4h20v15H1z" fill="#fbd364" />
                    <path d="M5 19v-7h12v7h-3v-3H8v3z" fill="#3c8fd0" />
                </svg>
            </TaskIcon>
            <TaskIcon label="Store">
                <svg width="24" height="24" viewBox="0 0 24 24">
                    <path d="M7 6V2h10v4" fill="none" stroke="#35b5e6" strokeWidth="2" />
                    <path d="M1 5h22v15q0 3-3 3H4q-3 0-3-3z" fill="#f4f4f4" />
                    <path d="M7.500 9h4v4h-4z" fill="#e8502c" />
                    <path d="M12.500 9h4v4h-4z" fill="#7cb52a" />
                    <path d="M7.500 14h4v4h-4z" fill="#2aa3df" />
                    <path d="M12.500 14h4v4h-4z" fill="#f5b81e" />
                </svg>
            </TaskIcon>
            <TaskIcon label="Calculator">
                <svg width="20" height="24" viewBox="0 0 20 24">
                    <rect x="1" y="1" width="18" height="22" rx="1" fill="#707a84" />
                    <path d="M3 3h14v4H3z" fill="#5fd0f2" />
                    <path d="M3 9h4v3H3zM8 9h4v3H8zM13 9h4v3h-4zM3 13.500h4v3H3zM8 13.500h4v3H8zM3 18h4v3H3zM8 18h4v3H8z" fill="#dfe3e6" />
                    <path d="M13 13.500h4V21h-4z" fill="#1e4f96" />
                </svg>
            </TaskIcon>
            <TaskIcon label="Mail">
                <svg width="24" height="22" viewBox="0 0 24 22">
                    <path d="M12 0l12 8H0z" fill="#1563ad" />
                    <path d="M0 7h24v14H0z" fill="#2aa9ec" />
                    <path d="M0 7h24l-12 8z" fill="#f0f6fb" />
                    <path d="M0 21l12-8 12 8z" fill="#1587d6" />
                </svg>
            </TaskIcon>
            <TaskIcon label="Chrome" active>
                <svg width="26" height="26" viewBox="0 0 26 26">
                    <circle cx="12" cy="12" r="10.500" fill="#f8c933" />
                    <path d="M3 6.500C8-1 18 0 22.500 8H12l-4.500 7z" fill="#e04436" />
                    <path d="M3 6.500l5.500 9 5.500 1-3 6C2 21-1 13 3 6.500z" fill="#33a452" />
                    <circle cx="12" cy="12" r="5" fill="#fff" />
                    <circle cx="12" cy="12" r="4" fill="#3c7de6" />
                    <circle cx="18" cy="18" r="7.500" fill="#c01b62" />
                    <text x="18" y="21" fontSize="9" textAnchor="middle" fill="#fff" fontFamily="Noto Sans, sans-serif">M</text>
                </svg>
            </TaskIcon>
            <TaskIcon label="Takeoff viewer">
                <svg width="24" height="24" viewBox="0 0 24 24">
                    <circle cx="11" cy="12" r="10" fill="#2b2c2e" />
                    <path d="M2 8C5 0 17 0 20 8z" fill="#85878a" />
                    <path d="M2 17L12 7h4l-2 10h-4l1-5-4 5z" fill="#c9cccf" />
                    <path d="M17 7l4 4-4 4-4-4z" fill="#35b4ea" />
                </svg>
            </TaskIcon>
            <TaskIcon label="PlanSwift" active>
                <svg width="24" height="24" viewBox="0 0 24 24">
                    <circle cx="12" cy="12" r="11" fill="#b8bbbe" />
                    <path d="M3 8C7-1 18-1 21 8z" fill="#e8eaeb" />
                    <path d="M3 17c3-7 12-12 18-5-3 4-9 4-14 2z" fill="#40484f" />
                    <circle cx="15" cy="11.500" r="3" fill="#1f5a8d" />
                    <path d="M12 14c-2 2-5 2-8 3l6-6z" fill="#f3f3f3" />
                </svg>
            </TaskIcon>
            <TaskIcon label="VLC" active>
                <svg width="20" height="24" viewBox="0 0 20 24">
                    <path d="M9 1h2l6 18H3z" fill="#f08a1a" />
                    <path d="M7.500 6h5l1 4h-7zM5.500 13h9l1 3h-11z" fill="#f5f0e8" />
                    <path d="M2 18h16l2 5H0z" fill="#f39a25" />
                </svg>
            </TaskIcon>
            <div className="ml-auto flex shrink-0 items-center">
                <svg width="24" height="18" viewBox="0 0 24 18" fill="none" stroke="#ddd" strokeWidth="1.500">
                    <path d="M1 2h19v14H1zM20 5h3v11h-3M4 5h13M12 9h5M12 12h5" />
                    <path d="M4 8h5v5H4z" strokeWidth="2" />
                </svg>
                <span className="ml-2 w-[30px] text-[13px]">33°C</span>
                <ChevronUp size={17} className="ml-3" color="#ddd" />
                <svg className="ml-2" width="14" height="16" viewBox="0 0 14 16" fill="none" stroke="#ddd" strokeWidth="1.300">
                    <rect x="2" y="4" width="7" height="8" rx="1" />
                    <path d="M10 7l3-1v4l-3-1M2 2q4-2 8 0M2 14q4 2 8 0" />
                </svg>
                <svg className="ml-2" width="14" height="16" viewBox="0 0 14 16">
                    <path d="M2 2v3M5 2v3M1 5h5v3H1zM3.500 8v3" stroke="#ddd" strokeWidth="1.300" fill="#ddd" />
                    <path d="M6 6h8v6H4" fill="#ddd" />
                </svg>
            </div>
        </nav>
    );
}

export default function App() {
    return (
        <div className="flex h-screen flex-col overflow-hidden bg-[#d6e4f3] font-['Noto_Sans',sans-serif]">
            <header className="flex h-[34px] shrink-0 overflow-hidden border-t-2 border-b border-t-[#a5afbd] border-b-[#92b4dd] bg-[#dde2ea] whitespace-nowrap">
                <nav className="flex items-center gap-[15px] pt-[13px] font-['Liberation_Sans',Arial,sans-serif] text-[12px] font-bold text-[#1b4290]">
                    {menuItems.map(item => <button key={item}>{item}</button>)}
                </nav>
                <input
                    aria-label="Search"
                    placeholder="Search"
                    className="mt-[6px] ml-[7px] h-[18px] w-[67px] border border-[#9aa2ac] bg-white pl-[1px] text-[11px] placeholder:text-[#666]"
                />
                <button className="mt-[5px] ml-[6px] h-5 w-[65px] border border-black bg-[#efefef] text-[11px] leading-[17px] text-black">Undo</button>
                <h1 className="mt-[6px] ml-[50px] text-[11px] leading-[18px] text-[#999ea8]">PlanSwift Pro Metric 10.3 - Lubavitch Girls High School</h1>
            </header>
            <Ribbon />
            <div className="h-[3px] shrink-0 border-t border-[#bcecf5] bg-[#7aa9d2]" />
            <div className="flex min-h-0 flex-1">
                <LeftPanel />
                <Splitter />
                <Canvas />
                <Splitter />
                <RightPanel />
            </div>
            <StatusBar />
            <Taskbar />
        </div>
    );
}
